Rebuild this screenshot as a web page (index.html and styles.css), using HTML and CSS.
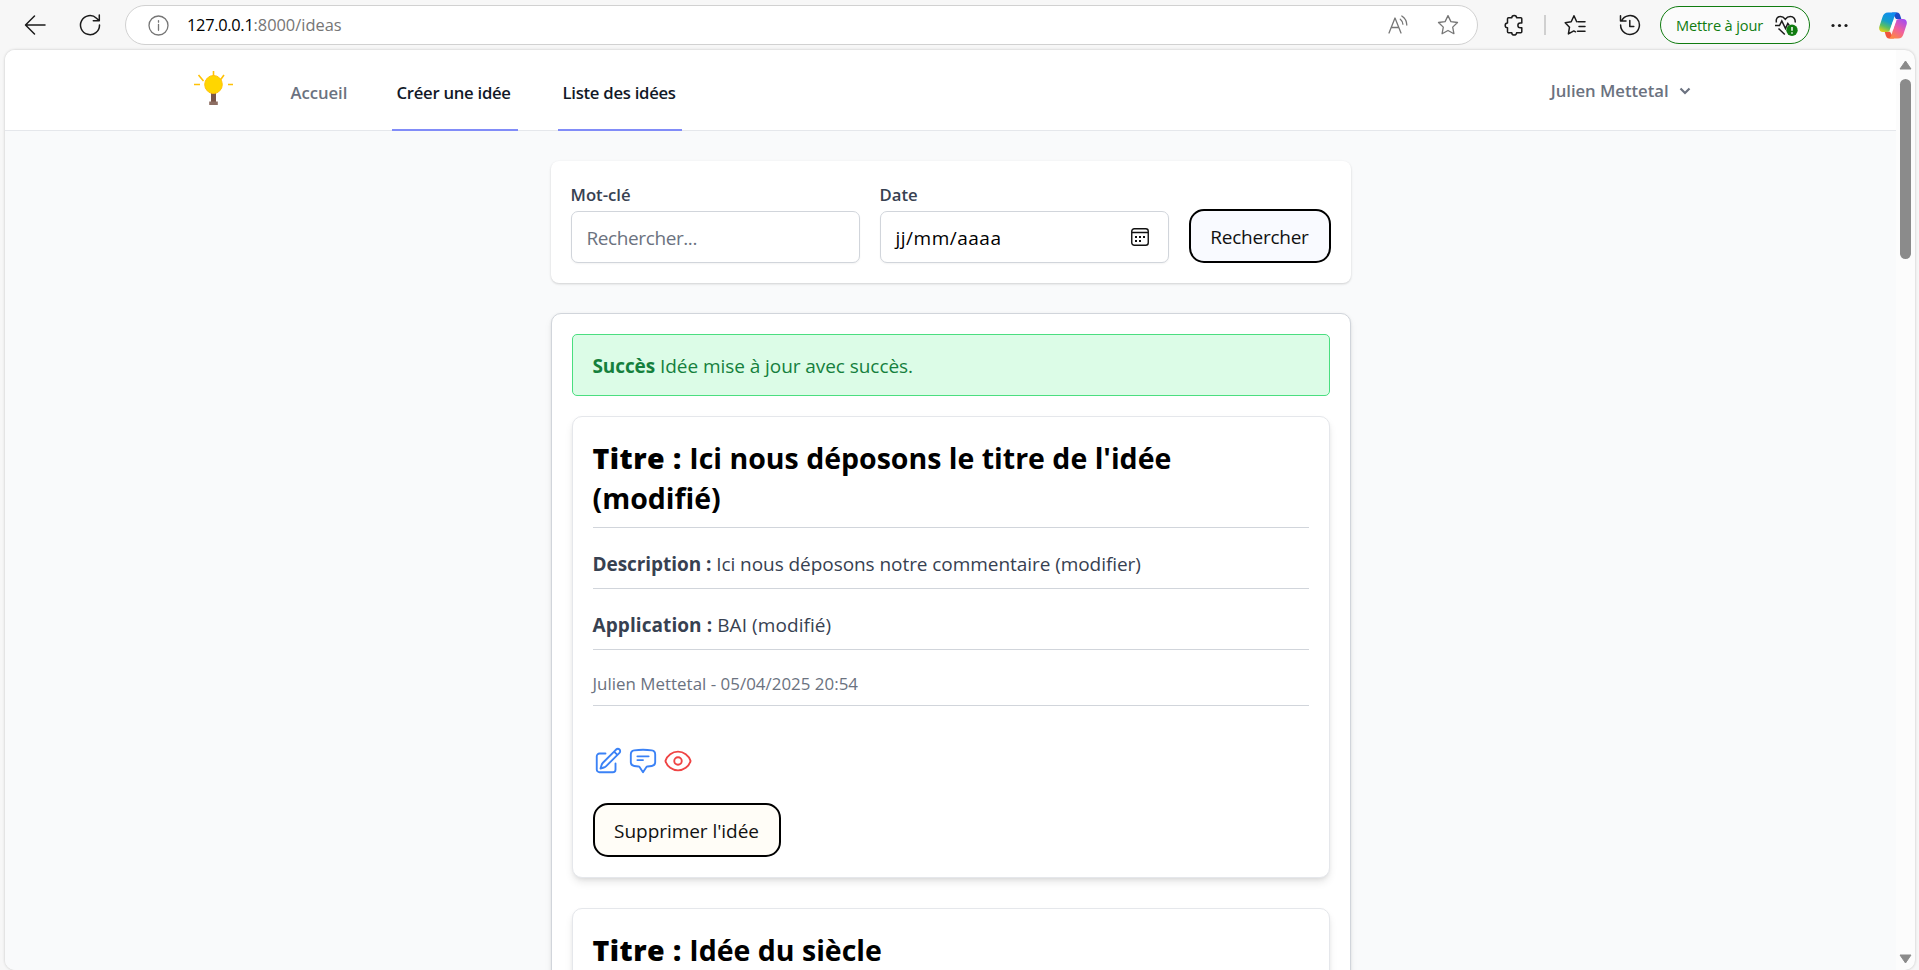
FILE: index.html
```html
<!DOCTYPE html>
<html lang="fr">
<head>
<meta charset="utf-8">
<title>Liste des idées</title>
<link rel="stylesheet" href="styles.css">
</head>
<body>
<div class="browser">
  <header class="toolbar">
    <svg class="icon back" width="22" height="22" viewBox="0 0 22 22"><path d="M21 11H2M10.500 2 1.500 11l9 9"/></svg>
    <svg class="icon reload" width="22" height="22" viewBox="0 0 22 22"><path d="M20.500 11A9.500 9.500 0 1 1 17.500 4.200L20 6.500M20.300 1v5.700h-6"/></svg>
    <div class="address">
      <svg class="icon muted" width="21" height="21" viewBox="0 0 21 21"><circle cx="10.500" cy="10.500" r="9.500"/><path d="M10.500 9.300v6M10.500 5.600v1.600"/></svg>
      <span class="url"><b>127.0.0.1</b>:8000/ideas</span>
      <svg class="icon muted read" width="21" height="20" viewBox="0 0 21 20"><path d="M1 18 7 3l6 15M3.200 12.500h7.600M12.300 4.200a7 7 0 0 1 2.600 5M13.800 1a11 11 0 0 1 5 9"/></svg>
      <svg class="icon muted" width="22" height="22" viewBox="0 0 22 22"><path d="m11 1.600 2.900 6 6.600.9-4.800 4.600 1.200 6.600L11 16.500l-5.900 3.200 1.200-6.600L1.500 8.500l6.600-.9Z"/></svg>
    </div>
    <svg class="icon puzzle" width="22" height="22" viewBox="0 0 22 22"><path d="M5.500 3.800h3.300a2.400 2.400 0 0 1 4.800 0h4.200a1 1 0 0 1 1 1v4.300h-1.600a2.300 2.300 0 0 0 0 4.600h1.600v4a1 1 0 0 1-1 1h-4.200a2.400 2.400 0 0 1-4.800 0H5.500a1 1 0 0 1-1-1v-4a2.300 2.300 0 0 1 0-4.600V4.800a1 1 0 0 1 1-1Z"/></svg>
    <span class="divider"></span>
    <svg class="icon favorites" width="22" height="22" viewBox="0 0 22 22"><path d="M14 7.800h7M15 12.500h6M13.500 17.200H21M12.700 7.800 10 1.800 7.200 7.800l-6 .9 4.300 4.500-1.100 6.700 5.400-3 1.700.9"/></svg>
    <svg class="icon history" width="22" height="22" viewBox="0 0 22 22"><path d="M2.500 7A9.400 9.400 0 1 1 1.600 11M1.500 1.800V7h5.500M10.800 6.500v6h4"/></svg>
    <div class="update">
      <span>Mettre à jour</span>
      <svg width="25" height="22" viewBox="0 0 25 22"><path class="line" d="M2.500 7.500C1.500 4 3.500 1.500 6.300 1.500c2.200 0 3.700 1 5 2.800 1.300-1.800 2.800-2.800 5-2.800 3.300 0 5.400 2.700 4.800 6M1 10.500h4.500l2.300-4.500 3.700 7.500 2.300-5 1.500 2M4.500 13.500l6.300 6"/><circle cx="18" cy="15.300" r="5.700" fill="#107c10"/><path d="M18 12v3.800M18 17.200v1.500" stroke="#fff" stroke-width="1.500"/></svg>
    </div>
    <svg class="dots" width="17" height="5" viewBox="0 0 17 5"><circle cx="2" cy="2.500" r="1.600"/><circle cx="8.500" cy="2.500" r="1.600"/><circle cx="15" cy="2.500" r="1.600"/></svg>
    <svg class="copilot" width="28" height="27" viewBox="0 0 28 27">
      <defs>
        <linearGradient id="cool" x1="0.600" y1="0" x2="0.200" y2="1"><stop offset="0" stop-color="#0f8bf0"/><stop offset=".45" stop-color="#159fc9"/><stop offset=".72" stop-color="#5abf62"/><stop offset="1" stop-color="#ead016"/></linearGradient>
        <linearGradient id="warm" x1="0.800" y1="0" x2="0.200" y2="1"><stop offset="0" stop-color="#a44df0"/><stop offset=".5" stop-color="#ef5fa0"/><stop offset="1" stop-color="#ff8a3c"/></linearGradient>
      </defs>
      <path fill="#1b49c8" d="M13 .5h5c2 0 2.700 1.300 3.300 3.200l1 3.300H17Z"/>
      <path fill="#f0533c" d="M15 26.500h-5c-2 0-2.700-1.300-3.300-3.200l-1-3.600H11Z"/>
      <path fill="url(#cool)" d="M9 .5h9.300c-1.600.5-2.300 2-2.900 4l-3.700 12c-.8 2.500-1.800 3.500-4 3.500H4c-3 0-4.500-2.500-3.600-5.500L3.500 5C4.500 2 6 .5 9 .5Z"/>
      <path fill="url(#warm)" d="M19 26.500H9.700c1.600-.5 2.300-2 2.900-4l3.700-12c.8-2.500 1.800-3.500 4-3.500H24c3 0 4.500 2.500 3.600 5.500L24.500 22c-1 3-2.500 4.500-5.500 4.500Z"/>
      <path fill="#fff" d="M14.200 8.500h3.300l-3.700 10h-3.300Z" opacity=".95"/>
    </svg>
  </header>

  <div class="viewport">
    <div class="page">
      <nav class="nav">
        <div class="nav-inner">
          <svg class="logo" width="40" height="36" viewBox="0 0 40 36"><path d="M19.500 1v7M4.500 5l5 6M30 5l-4 5.500M0 14.500h6M34 14.500h5" stroke="#ffc107" stroke-width="1.600"/><path d="M17 22h5v10h-5Z" fill="#795548"/><path d="M15.200 31.500h8.600V35h-8.600Z" fill="#8d6e63"/><ellipse cx="19.500" cy="14.500" rx="8.800" ry="9" fill="#ffd600" stroke="#ffc107"/></svg>
          <a class="nav-link first">Accueil</a>
          <a class="nav-link active create">Créer une idée</a>
          <a class="nav-link active">Liste des idées</a>
          <div class="user">Julien Mettetal <svg width="12" height="8" viewBox="0 0 12 8"><path d="m1.500 1.500 4.500 4.500 4.500-4.500" fill="none" stroke="#6b7280" stroke-width="2.200"/></svg></div>
        </div>
      </nav>

      <main class="main">
        <form class="search">
          <div class="field">
            <label>Mot-clé</label>
            <div class="input placeholder">Rechercher...</div>
          </div>
          <div class="field">
            <label>Date</label>
            <div class="input date"><span>jj/mm/aaaa</span>
              <svg width="18" height="18" viewBox="0 0 18 18"><rect x=".75" y=".75" width="16.500" height="16.500" rx="2.500" fill="none" stroke="#111" stroke-width="1.400"/><path d="M1 4.500h16" stroke="#111" stroke-width="1.400"/><path d="M4 8h2v2H4zM8 8h2v2H8zM12 8h2v2h-2zM4 12h2v2H4zM8 12h2v2H8z" fill="#111"/></svg>
            </div>
          </div>
          <button class="button cool" type="button">Rechercher</button>
        </form>

        <section class="list">
          <div class="alert"><strong>Succès</strong> <span>Idée mise à jour avec succès.</span></div>

          <article class="card">
            <h2 class="title"><b>Titre :</b> Ici nous déposons le titre de l'idée<br>(modifié)</h2>
            <p class="row"><strong>Description :</strong> Ici nous déposons notre commentaire (modifier)</p>
            <p class="row app"><strong>Application :</strong> BAI (modifié)</p>
            <p class="row meta">Julien Mettetal - 05/04/2025 20:54</p>
            <div class="actions">
              <svg class="blue" viewBox="0 0 24 24"><path d="m16.862 4.487 1.687-1.688a1.875 1.875 0 1 1 2.652 2.652L10.582 16.070a4.500 4.500 0 0 1-1.897 1.130L6 18l.8-2.685a4.500 4.500 0 0 1 1.130-1.897l8.932-8.931Zm0 0L19.500 7.125M18 14v4.750A2.250 2.250 0 0 1 15.750 21H5.250A2.250 2.250 0 0 1 3 18.750V8.250A2.250 2.250 0 0 1 5.250 6H10"/></svg>
              <svg class="blue" viewBox="0 0 24 24"><path d="M7.500 8.250h9m-9 3H12m-9.750 1.510c0 1.600 1.123 2.994 2.707 3.227 1.129.166 2.270.293 3.423.379.350.026.670.210.865.501L12 21l2.755-4.133a1.140 1.140 0 0 1 .865-.501 48.172 48.172 0 0 0 3.423-.379c1.584-.233 2.707-1.626 2.707-3.228V6.741c0-1.602-1.123-2.995-2.707-3.228A48.394 48.394 0 0 0 12 3c-2.392 0-4.744.175-7.043.513C3.373 3.746 2.250 5.140 2.250 6.741v6.018Z"/></svg>
              <svg class="red" viewBox="0 0 24 24"><path d="M2.036 12.322a1.012 1.012 0 0 1 0-.639C3.423 7.510 7.360 4.500 12 4.500c4.638 0 8.573 3.007 9.963 7.178.070.207.070.431 0 .639C20.577 16.490 16.640 19.500 12 19.500c-4.638 0-8.573-3.007-9.963-7.178Z"/><circle cx="12" cy="12" r="3"/></svg>
            </div>
            <button class="button warm" type="button">Supprimer l'idée</button>
          </article>

          <article class="card next">
            <h2 class="title"><b>Titre :</b> Idée du siècle</h2>
          </article>
        </section>
      </main>
    </div>
    <div class="scrollbar">
      <svg width="13" height="10" viewBox="0 0 13 10"><path d="M6.500 1 12 9H1Z"/></svg>
      <span class="thumb"></span>
      <svg class="down" width="13" height="10" viewBox="0 0 13 10"><path d="M6.500 9 12 1H1Z"/></svg>
    </div>
  </div>
</div>
</body>
</html>
```
FILE: styles.css
```css
* { box-sizing: border-box; }

body {
  margin: 0;
  font-family: "Open Sans", "Noto Sans", sans-serif;
  font-size: 19px;
  color: #000;
}

svg { display: block; flex: none; }

.browser {
  display: flex;
  flex-direction: column;
  height: 970px;
  overflow: hidden;
  background: #f7f7f7;
}

/* Browser toolbar */
.toolbar {
  display: flex;
  align-items: center;
  flex: none;
  height: 50px;
  padding: 0 12px 0 24px;
}
.icon { fill: none; stroke: #1b1b1b; stroke-width: 1.5; stroke-linejoin: round; stroke-linecap: round; }
.icon.muted { stroke: #767676; stroke-width: 1.3; }
.reload { margin-left: 33px; }
.address {
  display: flex;
  align-items: center;
  width: 1353px;
  height: 40px;
  margin: 0 0 0 24px;
  padding: 0 18px 0 22px;
  border: 1px solid #d1d1d1;
  border-radius: 20px;
  background: #fff;
}
.url { margin: -1px auto 0 18px; font-size: 16.4px; color: #767676; }
.url b { font-weight: 400; color: #000; letter-spacing: -.3px; }
.read { margin-right: 28px; }
.puzzle { margin-left: 25px; }
.divider { width: 2px; height: 20px; margin-left: 19px; background: #d0d0d0; }
.favorites { margin-left: 18px; }
.history { margin-left: 33px; }
.update {
  display: flex;
  align-items: center;
  justify-content: space-between;
  width: 150px;
  height: 38px;
  margin: -1px 0 0 19px;
  padding: 0 10px 0 15px;
  border: 1px solid #107c10;
  border-radius: 19px;
  background: #fbfbfb;
  color: #107c10;
  font-size: 14.6px;
  letter-spacing: -.15px;
  white-space: nowrap;
}
.update .line { fill: none; stroke: #1b1b1b; stroke-width: 1.5; }
.update svg { margin-top: 3px; }
.dots { margin-left: 21px; fill: #1b1b1b; }
.copilot { margin-left: 31px; }

/* Page frame */
.viewport {
  display: flex;
  flex: 1;
  min-height: 0;
  margin: 0 4px 0 5px;
  border-radius: 10px;
  overflow: hidden;
  background: #fcfcfc;
  box-shadow: 0 0 3px rgba(0, 0, 0, .22);
}
.page { flex: 1; overflow: hidden; background: #f9fafb; }
.scrollbar {
  display: flex;
  flex-direction: column;
  align-items: center;
  width: 19px;
  padding: 10px 0 6px;
}
.scrollbar svg { fill: #8b8b8b; stroke: #8b8b8b; stroke-linejoin: round; }
.thumb { width: 11px; height: 180px; margin-top: 9px; border-radius: 6px; background: #8b8b8b; }
.down { margin-top: auto; }

/* Navigation */
.nav { height: 81px; border-bottom: 1px solid #e5e7eb; background: #fff; }
.nav-inner {
  display: flex;
  width: 1520px;
  height: 81px;
  margin: 0 auto;
  gap: 40px;
}
.logo { margin: 20px 14px 0 3px; }
.nav-link {
  display: flex;
  align-items: center;
  width: 124px;
  padding: 5px 0 0 5px;
  border-bottom: 2px solid transparent;
  font-size: 16.7px;
  font-weight: 600;
  letter-spacing: -.27px;
  white-space: nowrap;
  color: #6b7280;
}
.nav-link.first { width: 66px; margin-left: -2px; letter-spacing: -.05px; }
.nav-link.create { width: 126px; }
.nav-link.active { border-color: #818cf8; color: #111827; }
.user {
  display: flex;
  align-items: center;
  gap: 10px;
  height: 81px;
  margin: 0 20px 0 auto;
  font-size: 16.7px;
  font-weight: 600;
  letter-spacing: -.03px;
  color: #6b7280;
}

/* Search form */
.main { width: 800px; margin: 0 auto; padding-top: 30px; }
.search {
  display: flex;
  align-items: flex-end;
  gap: 20px;
  padding: 20px;
  border-radius: 8px;
  background: #fff;
  box-shadow: 0 1px 3px rgba(0, 0, 0, .1), 0 1px 2px rgba(0, 0, 0, .08);
}
.field { flex: 1; }
.field label {
  display: block;
  height: 30px;
  padding-top: 1px;
  line-height: 25px;
  font-size: 16.7px;
  font-weight: 600;
  color: #374151;
}
.input {
  display: flex;
  align-items: center;
  justify-content: space-between;
  height: 52px;
  padding: 2px 15px 0;
  border: 1px solid #d1d5db;
  border-radius: 7px;
  background: #fff;
  box-shadow: 0 1px 2px rgba(0, 0, 0, .05);
}
.placeholder { color: #6b7280; letter-spacing: -.4px; }
.date span { letter-spacing: .5px; }
.date svg { margin: -3px 4px 0 0; }
.button {
  height: 54px;
  padding: 2px 19px 0;
  border: 2px solid #000;
  border-radius: 15px;
  font: inherit;
  color: #111;
}
.cool { width: 142px; background: #f9faff; letter-spacing: -.25px; }
.warm { display: block; width: 188px; background: #fffdf7; letter-spacing: -.05px; }

/* Idea list */
.list {
  margin-top: 30px;
  padding: 20px;
  border: 1px solid #d1d5db;
  border-radius: 10px;
  background: #fff;
  box-shadow: 0 1px 3px rgba(0, 0, 0, .1), 0 4px 8px rgba(0, 0, 0, .05);
}
.alert {
  height: 62px;
  margin-bottom: 20px;
  padding: 16px 20px 14px;
  border: 1px solid #4ade80;
  border-radius: 5px;
  background: #dcfce7;
  line-height: 31px;
  color: #15803d;
}
.alert span { letter-spacing: -.06px; }
.alert strong { letter-spacing: -.1px; }
.card {
  margin-bottom: 30px;
  padding: 20px;
  border: 1px solid #e5e7eb;
  border-radius: 10px;
  background: #fff;
  box-shadow: 0 5px 8px -1px rgba(0, 0, 0, .1), 0 2px 5px -2px rgba(0, 0, 0, .1);
}
.card.next { min-height: 420px; }
.title {
  margin: 0;
  padding: 1px 0 9px;
  border-bottom: 1px solid #d1d5db;
  font-size: 28.5px;
  line-height: 40px;
  font-weight: 700;
}
.title b { font-weight: 800; letter-spacing: .5px; }
.row {
  margin: 20px 0 0;
  padding: 1px 0 9px;
  border-bottom: 1px solid #d1d5db;
  line-height: 30px;
  letter-spacing: -.06px;
  color: #374151;
}
.app { letter-spacing: .08px; }
.meta { font-size: 16.9px; line-height: 25px; letter-spacing: .02px; color: #6b7280; }
.actions { display: flex; gap: 5px; margin: 40px 0 27px; }
.actions svg {
  width: 30px;
  height: 30px;
  fill: none;
  stroke-width: 1.5;
  stroke-linecap: round;
  stroke-linejoin: round;
}
.blue { stroke: #3b82f6; }
.red { stroke: #ef4444; }
```
